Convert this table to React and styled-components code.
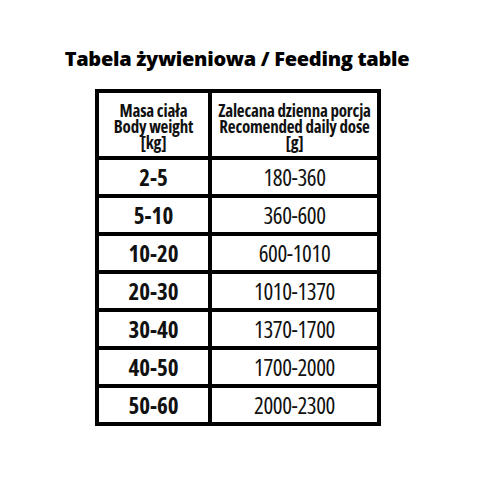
import React from "react";
import styled, { createGlobalStyle } from "styled-components";

const GlobalStyle = createGlobalStyle`
  html, body {
    margin: 0;
    padding: 0;
    background: #fff;
  }
  body {
    font-family: "Open Sans", "Liberation Sans", sans-serif;
    color: #111;
  }
`;

const Page = styled.div`
  width: 480px;
  height: 480px;
  display: flex;
  flex-direction: column;
  align-items: center;
  padding-top: 47px;
  box-sizing: border-box;
`;

const Title = styled.h1`
  margin: 0 0 18px;
  font-size: 20px;
  line-height: 24px;
  font-weight: 800;
  color: #000;
  letter-spacing: -0.3px;
  padding-right: 6px;
`;

const Table = styled.table`
  border-collapse: collapse;
  border: 4px solid #000;
  margin-right: 4px;
  table-layout: fixed;
  width: 286px;
`;

const Cell = styled.td`
  border: 4px solid #000;
  padding: 0;
  height: 34px;
  text-align: center;
  vertical-align: middle;
  font-size: 23px;
  line-height: 24px;
  font-weight: ${(p) => (p.$bold ? 700 : 400)};
  letter-spacing: ${(p) => (p.$bold ? "0" : "-0.4px")};
  font-stretch: 75%;
  width: ${(p) => p.$w}px;
`;

const HeadCell = styled(Cell).attrs({ as: "th" })`
  height: 59px;
  font-size: 17px;
  line-height: 16px;
  font-weight: 700;
  padding-top: 4px;
  letter-spacing: -0.2px;
`;

const rows = [
  ["2-5", "180-360"],
  ["5-10", "360-600"],
  ["10-20", "600-1010"],
  ["20-30", "1010-1370"],
  ["30-40", "1370-1700"],
  ["40-50", "1700-2000"],
  ["50-60", "2000-2300"],
];

export default function App() {
  return (
    <>
      <GlobalStyle />
      <Page>
        <Title>Tabela żywieniowa / Feeding table</Title>
        <Table>
          <thead>
            <tr>
              <HeadCell $w={109}>
                Masa ciała
                <br />
                Body weight
                <br />
                [kg]
              </HeadCell>
              <HeadCell $w={165}>
                Zalecana dzienna porcja
                <br />
                Recomended daily dose
                <br />
                [g]
              </HeadCell>
            </tr>
          </thead>
          <tbody>
            {rows.map(([kg, g]) => (
              <tr key={kg}>
                <Cell $bold>{kg}</Cell>
                <Cell>{g}</Cell>
              </tr>
            ))}
          </tbody>
        </Table>
      </Page>
    </>
  );
}
